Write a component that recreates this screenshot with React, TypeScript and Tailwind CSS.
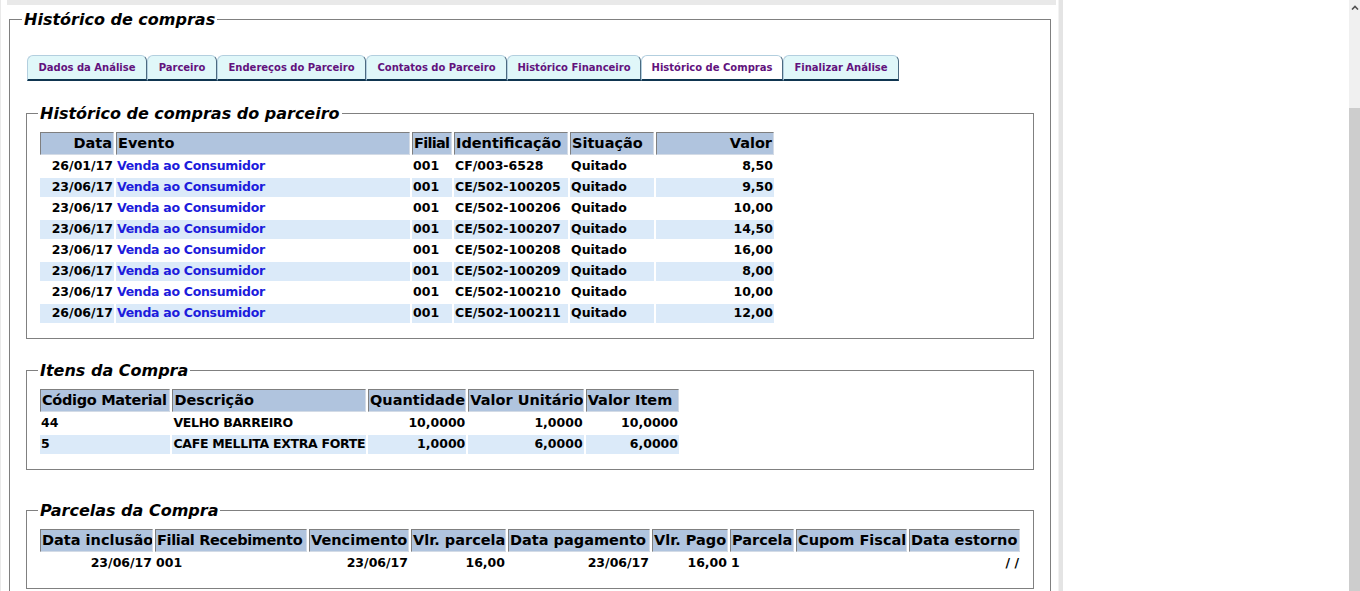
import React from 'react'

const tabs = [
  { label: 'Dados da Análise', w: 'w-[120px]' },
  { label: 'Parceiro', w: 'w-[70px]' },
  { label: 'Endereços do Parceiro', w: 'w-[149px]' },
  { label: 'Contatos do Parceiro', w: 'w-[141px]' },
  { label: 'Histórico Financeiro', w: 'w-[134px]' },
  { label: 'Histórico de Compras', w: 'w-[142px]', active: true },
  { label: 'Finalizar Análise', w: 'w-[116px]' },
]

const compras = [
  ['26/01/17', '001', 'CF/003-6528', '8,50'],
  ['23/06/17', '001', 'CE/502-100205', '9,50'],
  ['23/06/17', '001', 'CE/502-100206', '10,00'],
  ['23/06/17', '001', 'CE/502-100207', '14,50'],
  ['23/06/17', '001', 'CE/502-100208', '16,00'],
  ['23/06/17', '001', 'CE/502-100209', '8,00'],
  ['23/06/17', '001', 'CE/502-100210', '10,00'],
  ['26/06/17', '001', 'CE/502-100211', '12,00'],
]

const itens = [
  ['44', 'VELHO BARREIRO', '10,0000', '1,0000', '10,0000'],
  ['5', 'CAFE MELLITA EXTRA FORTE', '1,0000', '6,0000', '6,0000'],
]

const th =
  'h-[23px] px-[1px] bg-[#b0c4de] border border-t-[#7f7f7f] border-l-[#7f7f7f] border-r-[#d3dbe6] border-b-[#d3dbe6] text-[14.5px] font-bold text-black leading-none whitespace-nowrap overflow-hidden'
const td = 'h-[19px] px-[1px] py-0 text-[12.5px] font-bold leading-none whitespace-nowrap overflow-hidden'

function Box({ title, className, children }: { title: string; className?: string; children: React.ReactNode }) {
  return (
    <fieldset className={`border border-[#808080] pl-[11px] pr-[11px] pb-[13px] ml-[5px] mr-[5px] ${className ?? ''}`}>
      <legend className="px-[2px] text-[16px] leading-[19px] font-bold italic text-black">{title}</legend>
      <div className="mt-[7px]">{children}</div>
    </fieldset>
  )
}

export default function App() {
  return (
    <div className="flex h-[591px] overflow-hidden bg-white font-['DejaVu_Sans',Verdana,sans-serif] text-black">
      <div className="flex w-[1058px] shrink-0">
        <div className="w-[2px] bg-[#e9e9e9]" />
        <div className="flex flex-1 flex-col">
          <div className="ml-[6px] mr-[2px] h-[5px] shrink-0 bg-[#e9e9e9]" />
          <fieldset className="ml-[8px] mr-[7px] mt-[5px] border border-[#808080] pl-[11px] pr-[11px] pb-[20px]">
            <legend className="ml-[1px] px-[2px] text-[16px] leading-[19px] font-bold italic text-black">Histórico de compras</legend>

            <div className="ml-[6px] mt-[26px] flex">
              {tabs.map((t) => (
                <div
                  key={t.label}
                  className={`${t.w} flex h-[26px] items-center justify-center rounded-t-[6px] border-t border-l border-r border-b-2 border-t-[#b3cfdf] border-l-[#b3cfdf] border-r-[#4b6a80] border-b-[#0f3550] text-[10px] font-bold text-[#62127d] whitespace-nowrap ${
                    t.active ? 'bg-white' : 'bg-[#e0f7f9]'
                  }`}
                >
                  {t.label}
                </div>
              ))}
            </div>

            <Box title="Histórico de compras do parceiro" className="mt-[23px]">
              <table className="table-fixed w-[738px] border-separate border-spacing-[2px]">
                <colgroup>
                  <col className="w-[74px]" />
                  <col className="w-[294px]" />
                  <col className="w-[40px]" />
                  <col className="w-[114px]" />
                  <col className="w-[84px]" />
                  <col className="w-[118px]" />
                </colgroup>
                <thead>
                  <tr>
                    <th className={`${th} text-right`}>Data</th>
                    <th className={`${th} text-left`}>Evento</th>
                    <th className={`${th} text-left tracking-[-0.7px]`}>Filial</th>
                    <th className={`${th} text-left`}>Identificação</th>
                    <th className={`${th} text-left`}>Situação</th>
                    <th className={`${th} text-right`}>Valor</th>
                  </tr>
                </thead>
                <tbody>
                  {compras.map((r, i) => {
                    const bg = i % 2 === 1 ? 'bg-[#dbeaf9]' : ''
                    return (
                      <tr key={i}>
                        <td className={`${td} ${bg} text-right`}>{r[0]}</td>
                        <td className={`${td} ${bg} text-left text-[#1c1cdc] tracking-[-0.3px]`}>Venda ao Consumidor</td>
                        <td className={`${td} ${bg} text-left`}>{r[1]}</td>
                        <td className={`${td} ${bg} text-left`}>{r[2]}</td>
                        <td className={`${td} ${bg} text-left`}>Quitado</td>
                        <td className={`${td} ${bg} text-right`}>{r[3]}</td>
                      </tr>
                    )
                  })}
                </tbody>
              </table>
            </Box>

            <Box title="Itens da Compra" className="mt-[22px]">
              <table className="table-fixed w-[643px] border-separate border-spacing-[2px]">
                <colgroup>
                  <col className="w-[130px]" />
                  <col className="w-[193px]" />
                  <col className="w-[98px]" />
                  <col className="w-[115px]" />
                  <col className="w-[93px]" />
                </colgroup>
                <thead>
                  <tr>
                    <th className={`${th} text-left tracking-[-0.3px]`}>Código Material</th>
                    <th className={`${th} text-left`}>Descrição</th>
                    <th className={`${th} text-left`}>Quantidade</th>
                    <th className={`${th} text-left`}>Valor Unitário</th>
                    <th className={`${th} text-left`}>Valor Item</th>
                  </tr>
                </thead>
                <tbody>
                  {itens.map((r, i) => {
                    const bg = i % 2 === 1 ? 'bg-[#dbeaf9]' : ''
                    return (
                      <tr key={i}>
                        <td className={`${td} ${bg} text-left`}>{r[0]}</td>
                        <td className={`${td} ${bg} text-left tracking-[-0.3px]`}>{r[1]}</td>
                        <td className={`${td} ${bg} text-right`}>{r[2]}</td>
                        <td className={`${td} ${bg} text-right`}>{r[3]}</td>
                        <td className={`${td} ${bg} text-right`}>{r[4]}</td>
                      </tr>
                    )
                  })}
                </tbody>
              </table>
            </Box>

            <Box title="Parcelas da Compra" className="mt-[31px]">
              <table className="table-fixed w-[984px] border-separate border-spacing-[2px]">
                <colgroup>
                  <col className="w-[113px]" />
                  <col className="w-[152px]" />
                  <col className="w-[100px]" />
                  <col className="w-[95px]" />
                  <col className="w-[142px]" />
                  <col className="w-[76px]" />
                  <col className="w-[64px]" />
                  <col className="w-[111px]" />
                  <col className="w-[111px]" />
                </colgroup>
                <thead>
                  <tr>
                    <th className={`${th} text-left`}>Data inclusão</th>
                    <th className={`${th} text-left tracking-[-0.35px]`}>Filial Recebimento</th>
                    <th className={`${th} text-left`}>Vencimento</th>
                    <th className={`${th} text-left`}>Vlr. parcela</th>
                    <th className={`${th} text-left`}>Data pagamento</th>
                    <th className={`${th} text-left`}>Vlr. Pago</th>
                    <th className={`${th} text-left`}>Parcela</th>
                    <th className={`${th} text-left`}>Cupom Fiscal</th>
                    <th className={`${th} text-left`}>Data estorno</th>
                  </tr>
                </thead>
                <tbody>
                  <tr>
                    <td className={`${td} text-right`}>23/06/17</td>
                    <td className={`${td} text-left`}>001</td>
                    <td className={`${td} text-right`}>23/06/17</td>
                    <td className={`${td} text-right`}>16,00</td>
                    <td className={`${td} text-right`}>23/06/17</td>
                    <td className={`${td} text-right`}>16,00</td>
                    <td className={`${td} text-left`}>1</td>
                    <td className={`${td} text-left`}></td>
                    <td className={`${td} text-right`}>/ /</td>
                  </tr>
                </tbody>
              </table>
            </Box>
          </fieldset>
        </div>
      </div>

      <div className="w-[5px] shrink-0 border-l border-[#f2f2f2] bg-[#e4e4e4]" />
      <div className="flex-1" />

      <div className="flex w-[11px] shrink-0 flex-col bg-[#f0f0f0]">
        <div className="flex h-[12px] items-start justify-center pt-[5px]">
          <svg width="8" height="5" viewBox="0 0 8 5">
            <path d="M1 4.5 L4 1.5 L7 4.5" fill="none" stroke="#505050" strokeWidth="1.6" />
          </svg>
        </div>
        <div className="mt-[96px] flex-1 bg-[#cdcdcd]" />
      </div>
    </div>
  )
}
